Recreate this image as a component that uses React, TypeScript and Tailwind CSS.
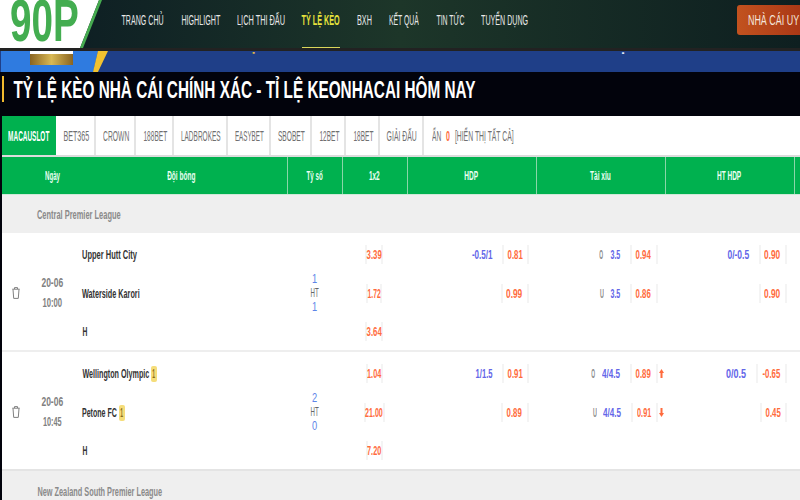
import React, { useLayoutEffect, useRef } from "react";

const cols = "grid-cols-[28px_45px_212px_55px_64.5px_129px_129px_129px_1fr]";
const font = { fontFamily: '"Liberation Sans",Arial,sans-serif' };

/* Text condensed to a measured width: no narrow family is installed. */
function T({ w, children, className = "" }: { w: number; children: React.ReactNode; className?: string }) {
  const ref = useRef<HTMLSpanElement>(null);
  useLayoutEffect(() => {
    const el = ref.current;
    if (el) el.style.transform = `scaleX(${w / el.offsetWidth})`;
  }, [w]);
  return (
    <span className={`inline-flex shrink-0 justify-center ${className}`} style={{ width: w }}>
      <span ref={ref} className="inline-block shrink-0 whitespace-nowrap">{children}</span>
    </span>
  );
}

const nav: [string, number][] = [["TRANG CHỦ", 42], ["HIGHLIGHT", 39], ["LỊCH THI ĐẤU", 48], ["TỶ LỆ KÈO", 38], ["BXH", 15], ["KẾT QUẢ", 30], ["TIN TỨC", 28], ["TUYỂN DỤNG", 47]];
const tabs: [string, number][] = [["MACAUSLOT", 41], ["BET365", 26], ["CROWN", 26], ["188BET", 24], ["LADBROKES", 40], ["EASYBET", 29], ["SBOBET", 27], ["12BET", 20], ["18BET", 20], ["GIẢI ĐẤU", 30]];
const heads: [string, number][] = [["Tỷ số", 16], ["1x2", 11], ["HDP", 14], ["Tài xỉu", 21], ["HT HDP", 24]];

type Tx = [string, number];

function Odd({ t, box }: { t: Tx; box: number }) {
  return (
    <span className="flex h-[19px] shrink-0 items-center justify-center border-x-2 border-[#f4f4f4] font-bold text-[#ff6b3d]" style={{ width: box }}>
      <T w={t[1]}>{t[0]}</T>
    </span>
  );
}

function Arrow({ up }: { up: boolean }) {
  return (
    <svg className="absolute right-[1px] h-[9px] w-[5px]" viewBox="0 0 5 9" fill="#ff6b3d">
      <polygon points={up ? "2.5,0 5,4 3.5,4 3.5,9 1.5,9 1.5,4 0,4" : "2.5,9 5,5 3.5,5 3.5,0 1.5,0 1.5,5 0,5"} />
    </svg>
  );
}

function Market({ pre, line, odd, box, arrow }: { pre?: Tx; line?: Tx; odd: Tx; box: number; arrow?: "up" | "down" }) {
  return (
    <div className="relative flex items-center justify-end self-center pr-[7px]">
      {pre && <T w={pre[1]} className="mr-[7px] font-bold text-[#8a8a8a]">{pre[0]}</T>}
      {line && <T w={line[1]} className="mr-[9px] font-bold text-[#6366e8]">{line[0]}</T>}
      <Odd t={odd} box={box} />
      {arrow && <Arrow up={arrow === "up"} />}
    </div>
  );
}

function Card() {
  return (
    <span className="ml-[2px] flex h-[16px] w-[6px] items-center justify-center rounded-[2px] bg-[#f5dd7a] font-bold text-[#8a6d1d]">
      <T w={3}>1</T>
    </span>
  );
}

function TrashIcon() {
  return (
    <svg className="h-[12px] w-[8px]" viewBox="0 0 8 12" fill="none" stroke="#808080" strokeWidth="1">
      <path d="M0.3 2.2H7.7M2.5 2V0.6H5.5V2M1 2.4L1.7 11.4H6.3L7 2.4" />
    </svg>
  );
}

type MP = {
  date: Tx; time: Tx; teams: [React.ReactNode, React.ReactNode]; score: [string, string];
  x: [Tx, Tx, Tx];
  h1: React.ReactNode; h2: React.ReactNode; o1: React.ReactNode; o2: React.ReactNode; t1: React.ReactNode; t2: React.ReactNode;
  border: string;
};

function Match({ date, time, teams, score, x, h1, h2, o1, o2, t1, t2, border }: MP) {
  const team = "col-start-3 flex items-center gap-0 pl-[7px] font-bold text-[#333]";
  return (
    <div className={`grid ${cols} grid-rows-[39px_39px_37px] border-b-2 ${border} bg-white pt-[2px] text-[13.5px] leading-none`}>
      <div className="row-span-3 row-start-1 flex items-center justify-center pr-[1px]"><TrashIcon /></div>
      <div className="row-span-3 row-start-1 flex flex-col items-center justify-center gap-[7px] pr-[1px] text-[13.5px] font-bold text-[#808080]">
        <T w={22}>{date[0]}</T>
        <T w={time[1]}>{time[0]}</T>
      </div>
      <div className={`${team} row-start-1`}>{teams[0]}</div>
      <div className={`${team} row-start-2`}>{teams[1]}</div>
      <div className={`${team} row-start-3`}><T w={5}>H</T></div>
      <div className="col-start-4 row-span-3 row-start-1 flex flex-col items-center justify-center gap-[1px] text-[13px]">
        <T w={5} className="text-[#5d85e8]">{score[0]}</T>
        <T w={8} className="text-[#666]">HT</T>
        <T w={5} className="text-[#5d85e8]">{score[1]}</T>
      </div>
      <div className="col-start-5 row-start-1 flex items-center justify-center"><Odd t={x[0]} box={x[0][1] + 3} /></div>
      <div className="col-start-5 row-start-2 flex items-center justify-center"><Odd t={x[1]} box={x[1][1] + 3} /></div>
      <div className="col-start-5 row-start-3 flex items-center justify-center"><Odd t={x[2]} box={x[2][1] + 3} /></div>
      <div className="col-start-6 row-start-1 flex justify-end">{h1}</div>
      <div className="col-start-6 row-start-2 flex justify-end">{h2}</div>
      <div className="col-start-7 row-start-1 flex justify-end">{o1}</div>
      <div className="col-start-7 row-start-2 flex justify-end">{o2}</div>
      <div className="col-start-8 row-start-1 flex justify-end">{t1}</div>
      <div className="col-start-8 row-start-2 flex justify-end">{t2}</div>
    </div>
  );
}

function League({ name, w, h }: { name: string; w: number; h: string }) {
  return (
    <div className={`flex ${h} items-center bg-[#efefef] pl-[35px] pt-[2px] text-[13.5px] font-bold text-[#8a8a8a]`}>
      <T w={w}>{name}</T>
    </div>
  );
}

export default function App() {
  return (
    <div className="h-[500px] w-[800px] overflow-hidden bg-[#02030c]" style={font}>
      <header className="relative flex h-[48px] overflow-hidden bg-gradient-to-r from-[#0b1a22] via-[#1d3629] to-[#0e1f20]">
        <svg className="absolute left-0 top-0 h-[48px] w-[104px]" viewBox="0 0 104 48">
          <polygon points="0,0 99,0 80,48 0,48" fill="#fff" />
          <polygon points="99,0 102,0 83,48 80,48" fill="#46ac50" />
        </svg>
        <span className="absolute left-[10px] top-[-14px] text-[60px] font-bold leading-[70px] text-[#43ad50]">
          <T w={69}>90P</T>
        </span>
        <nav className="ml-[122px] flex h-full shrink-0 items-center gap-[17px] text-[15px] text-[#e8e8e8]">
          {nav.map(([n, w]) =>
            n === "TỶ LỆ KÈO" ? (
              <span key={n} className="relative flex h-full items-center pb-[7px] font-bold text-[#e6e23c]">
                <T w={w}>{n}</T>
                <span className="absolute bottom-0 left-0 right-0 h-px bg-[#d9d65a]" />
              </span>
            ) : (
              <span key={n} className="pb-[7px]"><T w={w}>{n}</T></span>
            )
          )}
        </nav>
        <div className="ml-[209px] mt-[5px] flex h-[30px] w-[90px] shrink-0 items-center rounded-[3px] bg-gradient-to-r from-[#c2521f] to-[#a02c12] pl-[11px] text-[15px] text-[#f4e6dc]">
          <T w={68}>NHÀ CÁI UY TÍN</T>
        </div>
      </header>
      <div className="h-[3px] bg-[#222]" />
      <div className="relative h-[21px] overflow-hidden bg-[#1f3f88]">
        <div className="absolute left-[1px] top-0 h-full w-[97px] bg-[#2f7be0]" style={{ clipPath: "polygon(0 0,100% 0,95% 100%,0 100%)" }} />
        <div className="absolute left-[93px] top-0 h-full w-[15px] bg-[#f2c230]" style={{ clipPath: "polygon(33% 0,100% 0,33% 100%,0 100%)" }} />
        <div className="absolute left-[30px] top-0 h-[14px] w-[43px] border-t-[3px] border-white bg-gradient-to-r from-[#8a6420] via-[#d9b955] to-[#8a6420]" />
        <div className="absolute left-[237px] top-[-15px] flex text-[17px] font-bold leading-[20px]">
          <T w={163} className="text-[#e0b84a]">DỰ ĐOÁN SOI KÈO MU</T>
          <T w={277} className="ml-[20px] text-[#dfe6f5]">SÂN MANCHESTER CITY TẠI CHÂU Á</T>
        </div>
      </div>
      <div className="flex h-[44px] pl-[2px] pt-[4px]">
        <span className="h-[26px] w-[2px] bg-[#f0b92e]" />
        <h1 className="ml-[9px] text-[23px] font-bold leading-[28px] text-white">
          <T w={462}>TỶ LỆ KÈO NHÀ CÁI CHÍNH XÁC - TỈ LỆ KEONHACAI HÔM NAY</T>
        </h1>
      </div>
      <div className="ml-[2px] bg-white">
        <div className="flex h-[41px] items-stretch border-b-2 border-[#dcdcdc] text-[14px] text-[#707070]">
          {tabs.map(([t, w], i) => (
            <span key={t} className={i === 0 ? "flex items-center bg-[#00b14f] pl-[6px] pr-[7px] pt-[2px] font-bold text-white" : "flex items-center border-r-2 border-[#e4e4e4] pl-[7px] pr-[5px] pt-[2px]"}>
              <T w={w}>{t}</T>
            </span>
          ))}
          <span className="flex items-center pl-[8px] pt-[2px]">
            <T w={9}>ẨN</T>
            <T w={4} className="ml-[5px] font-bold text-[#ff6b3d]">0</T>
            <T w={59} className="ml-[5px]">[HIỂN THỊ TẤT CẢ]</T>
          </span>
        </div>
        <div className={`grid ${cols} h-[37px] bg-[#00b14f] pb-0 text-[13.5px] font-bold text-[#eafff2]`}>
          <span />
          <span className="flex items-center justify-center pt-[1px]"><T w={15}>Ngày</T></span>
          <span className="flex items-center justify-center pt-[1px]"><T w={28}>Đội bóng</T></span>
          {heads.map(([h, w]) => (
            <span key={h} className="flex items-center justify-center border-l border-[#8ad6a8] pr-[1px] pt-[1px]"><T w={w}>{h}</T></span>
          ))}
          <span className="border-l border-[#8ad6a8]" />
        </div>
        <div className="h-px bg-[#cfe9d8]" />
        <League name="Central Premier League" w={84} h="h-[38px]" />
        <Match
          border="border-[#eeeeee]"
          date={["20-06", 22]} time={["10:00", 20]}
          teams={[<T w={55}>Upper Hutt City</T>, <T w={58}>Waterside Karori</T>]}
          score={["1", "1"]}
          x={[["3.39", 15], ["1.72", 13], ["3.64", 15]]}
          h1={<Market line={["-0.5/1", 21]} odd={["0.81", 15]} box={27} />}
          h2={<Market odd={["0.99", 16]} box={28} />}
          o1={<Market pre={["O", 4]} line={["3.5", 10]} odd={["0.94", 15]} box={28} />}
          o2={<Market pre={["U", 4]} line={["3.5", 10]} odd={["0.86", 15]} box={28} />}
          t1={<Market line={["0/-0.5", 22]} odd={["0.90", 16]} box={28} />}
          t2={<Market odd={["0.90", 16]} box={28} />}
        />
        <Match
          border="border-[#e4e4e4]"
          date={["20-06", 22]} time={["10:45", 19]}
          teams={[<><T w={67}>Wellington Olympic</T><Card /></>, <><T w={35}>Petone FC</T><Card /></>]}
          score={["2", "0"]}
          x={[["1.04", 14], ["21.00", 18], ["7.20", 14]]}
          h1={<Market line={["1/1.5", 17]} odd={["0.91", 15]} box={27} />}
          h2={<Market odd={["0.89", 15]} box={28} />}
          o1={<Market pre={["O", 4]} line={["4/4.5", 18]} odd={["0.89", 15]} box={28} arrow="up" />}
          o2={<Market pre={["U", 4]} line={["4/4.5", 18]} odd={["0.91", 14]} box={27} arrow="down" />}
          t1={<Market line={["0/0.5", 20]} odd={["-0.65", 18]} box={31} />}
          t2={<Market odd={["0.45", 15]} box={27} />}
        />
        <League name="New Zealand South Premier League" w={125} h="h-[40px]" />
      </div>
    </div>
  );
}
